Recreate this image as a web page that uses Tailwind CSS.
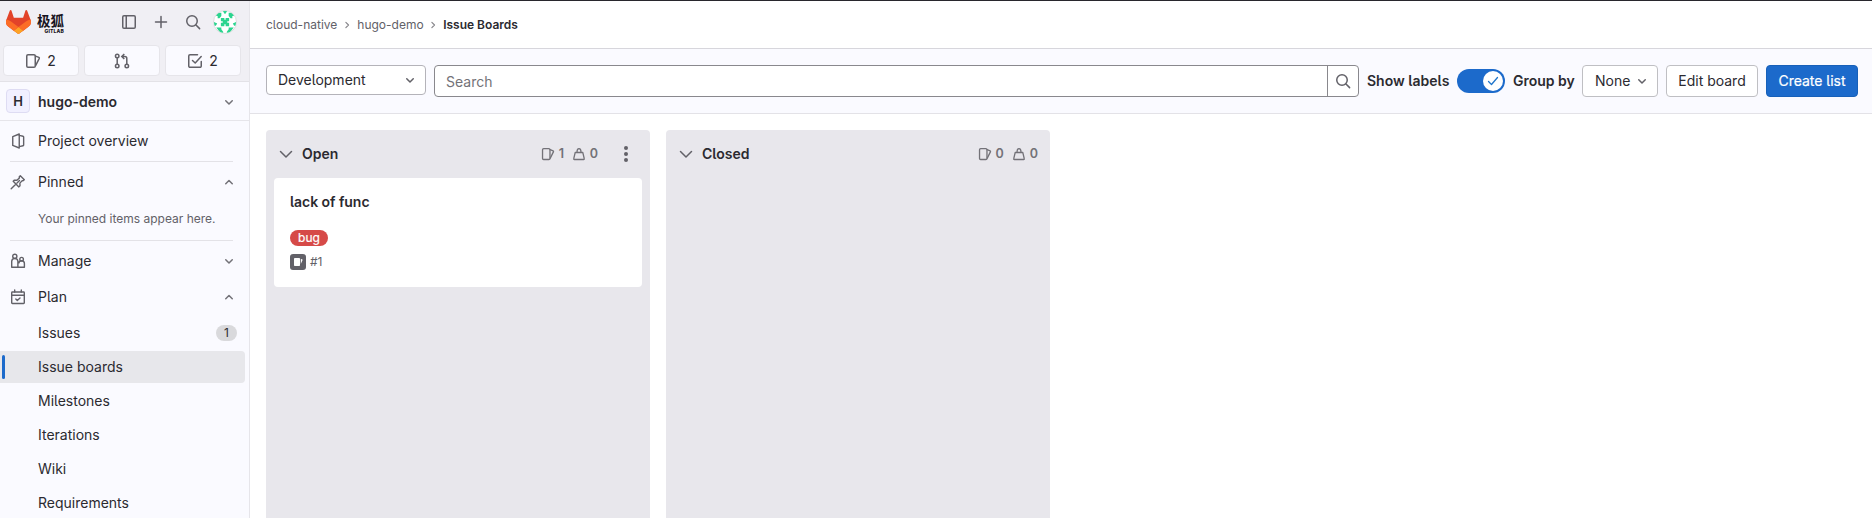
<!DOCTYPE html>
<html lang="en">
<head>
<meta charset="utf-8">
<title>Issue Boards · hugo-demo</title>
<script src="https://cdn.jsdelivr.net/npm/@tailwindcss/browser@4"></script>
</head>
<body class="h-[518px] w-[1872px] overflow-hidden bg-white font-['Inter','Noto_Sans_CJK_SC',sans-serif] text-sm leading-4 text-[#2b2a30] [font-feature-settings:'cv05'_1]">
<svg class="hidden" xmlns="http://www.w3.org/2000/svg">
  <defs>
    <symbol id="down" viewBox="0 0 16 16"><path d="M4.75 6.75 8 10l3.250-3.250" fill="none" stroke="currentColor" stroke-width="1.5" stroke-linecap="round" stroke-linejoin="round"/></symbol>
    <symbol id="up" viewBox="0 0 16 16"><path d="M4.75 9.75 8 6.500l3.250 3.250" fill="none" stroke="currentColor" stroke-width="1.5" stroke-linecap="round" stroke-linejoin="round"/></symbol>
    <symbol id="right" viewBox="0 0 16 16"><path d="M6.500 4.500 10 8l-3.500 3.500" fill="none" stroke="currentColor" stroke-width="1.6" stroke-linecap="round" stroke-linejoin="round"/></symbol>
    <symbol id="lgdown" viewBox="0 0 16 16"><path d="M2.500 5.500 8 11l5.500-5.500" fill="none" stroke="currentColor" stroke-width="1.5" stroke-linecap="round" stroke-linejoin="round"/></symbol>
    <symbol id="search" viewBox="0 0 16 16"><g fill="none" stroke="currentColor" stroke-width="1.5" stroke-linecap="round"><circle cx="7" cy="7" r="5.250"/><path d="m11 11 3.600 3.600"/></g></symbol>
    <symbol id="issues" viewBox="0 0 16 16"><g fill="none" stroke="currentColor" stroke-width="1.5" stroke-linejoin="round" stroke-linecap="round"><rect x="1.750" y="1.750" width="8.500" height="12.500" rx="1.250"/><path d="m10.500 3.100 3.400 1.300a.7.7 0 0 1 .4.900L10.600 12.700"/></g></symbol>
    <symbol id="weight" viewBox="0 0 16 16"><g fill="none" stroke="currentColor" stroke-width="1.5" stroke-linejoin="round"><path d="M3.700 6.250h8.600l1.700 7.100a.7.7 0 0 1-.7.900H2.700a.7.7 0 0 1-.7-.9z"/><path d="M5.700 6c0-2.400.9-4.250 2.300-4.250S10.300 3.600 10.300 6"/></g></symbol>
  </defs>
</svg>
<div class="flex h-full flex-col border-t border-[#28272d]">
<div class="flex min-h-0 flex-1">
  <aside class="w-[250px] shrink-0 border-r border-[#e6e5ea] bg-[#fafaff]">
    <div class="h-[81px] border-b border-[#e3e2e7] bg-[#f0eff4]">
      <div class="flex h-[42px] items-center pl-1.5">
        <svg class="h-6 w-[25px]" viewBox="0 0 25 24"><path fill="#E24329" d="m24.507 9.500-.034-.09L21.082.562a.896.896 0 0 0-1.694.091l-2.290 7.010H7.825L5.535.653a.898.898 0 0 0-1.694-.09L.451 9.411.416 9.500a6.297 6.297 0 0 0 2.090 7.278l.012.01.03.022 5.160 3.867 2.560 1.935 1.554 1.176a1.051 1.051 0 0 0 1.268 0l1.555-1.176 2.560-1.935 5.197-3.890.014-.01A6.297 6.297 0 0 0 24.507 9.500Z"/><path fill="#FC6D26" d="m24.507 9.500-.034-.09a11.440 11.440 0 0 0-4.560 2.051l-7.447 5.632 4.742 3.584 5.197-3.890.014-.01A6.297 6.297 0 0 0 24.507 9.500Z"/><path fill="#FCA326" d="m7.707 20.677 2.560 1.935 1.555 1.176a1.051 1.051 0 0 0 1.268 0l1.555-1.176 2.560-1.935-4.743-3.584-4.755 3.584Z"/><path fill="#FC6D26" d="M5.010 11.461a11.430 11.430 0 0 0-4.560-2.050L.416 9.500a6.297 6.297 0 0 0 2.090 7.278l.012.01.03.022 5.160 3.867 4.745-3.584-7.444-5.632Z"/></svg>
        <div class="ml-[5px] flex w-[28px] flex-col items-end pt-[3px] text-[#171321]">
          <span class="font-['Noto_Sans_CJK_SC',sans-serif] text-[13.500px] leading-[14px] font-bold whitespace-nowrap">极狐</span>
          <span class="mt-[2px] text-[5px] leading-[5px] font-extrabold tracking-[0.15px] whitespace-nowrap">GITLAB</span>
        </div>
        <svg class="ml-[57px] size-4 text-[#626168]" viewBox="0 0 16 16" fill="none" stroke="currentColor" stroke-width="1.5"><rect x="1.750" y="1.750" width="12.500" height="12.500" rx="1.250"/><path d="M5.250 2v12"/></svg>
        <svg class="ml-4 size-4 text-[#626168]" viewBox="0 0 16 16" fill="none" stroke="currentColor" stroke-width="1.500" stroke-linecap="round"><path d="M8 2.500v11M2.500 8h11"/></svg>
        <svg class="ml-4 size-4 text-[#626168]"><use href="#search"/></svg>
        <svg class="ml-3 size-6 rounded-full border border-[#dcdcde] bg-white text-[#2bd48f]" viewBox="0 0 24 24" fill="currentColor">
          <path d="M4 2h4v3.500L6 8H4V5.500H2zM20 2h-4v3.500L18 8h2V5.500h2zM9.500 0h5L12 3.500zM0 12l3.500 1.500L2 16H0zM24 12l-3.500 1.500L22 16h2zM2.500 18H8v2l2 2.500V24H7zM21.500 18H16v2l-2 2.500V24h3z"/>
          <path d="M7.500 7.500h3.800v2h1.400v-2h3.800v3.800h-2v1.400h2v3.800h-3.800v-2h-1.400v2H7.500v-3.800h2v-1.400h-2z"/>
        </svg>
      </div>
      <div class="flex gap-[5px] pt-[2px] pl-[2.500px]">
        <div class="flex h-[31px] w-[76px] items-center justify-center gap-1.5 rounded-[4px] border border-[#e6e5ea] bg-[#fafaff]"><svg class="size-4 text-[#626168]"><use href="#issues"/></svg><span>2</span></div>
        <div class="flex h-[31px] w-[76px] items-center justify-center rounded-[4px] border border-[#e6e5ea] bg-[#fafaff]"><svg class="size-4 text-[#626168]" viewBox="0 0 16 16" fill="none" stroke="currentColor" stroke-width="1.500"><circle cx="3.200" cy="3" r="1.750"/><circle cx="3.200" cy="13" r="1.750"/><circle cx="12.800" cy="13" r="1.750"/><path d="M3.200 4.800v6.400M12.800 11.200V5.500a2 2 0 0 0-2-2H8M10.300 1 7.800 3.500 10.300 6"/></svg></div>
        <div class="flex h-[31px] w-[76px] items-center justify-center gap-1.5 rounded-[4px] border border-[#e6e5ea] bg-[#fafaff]"><svg class="size-4 text-[#626168]" viewBox="0 0 16 16" fill="none" stroke="currentColor" stroke-width="1.500" stroke-linecap="round" stroke-linejoin="round"><path d="M10.500 1.750H3A1.250 1.250 0 0 0 1.750 3v10A1.250 1.250 0 0 0 3 14.250h10A1.250 1.250 0 0 0 14.250 13V8.500M5.500 7.500 8.200 10l6-6.500"/></svg><span>2</span></div>
      </div>
    </div>
    <div class="flex h-[39px] items-center border-b border-[#e6e5ea] pr-3 pl-1.5">
      <span class="flex size-6 items-center justify-center rounded-[4px] border border-[#dedcf3] bg-[#f1f0ff] text-[13px] font-semibold">H</span>
      <span class="ml-2 flex-1 pt-[2px] font-semibold">hugo-demo</span>
      <svg class="mt-[2px] size-4 text-[#737278]"><use href="#down"/></svg>
    </div>
    <div class="flex h-10 items-center pl-2.5">
      <svg class="size-4 text-[#626168]" viewBox="0 0 16 16" fill="none" stroke="currentColor" stroke-width="1.400" stroke-linejoin="round"><path d="M2.750 3.600 9.250 1v14l-6.500-2.600zM9.250 2.400l3.800.8a.7.7 0 0 1 .6.700v8.200a.7.7 0 0 1-.6.7l-3.800.8"/></svg>
      <span class="ml-3">Project overview</span>
    </div>
    <div class="mr-4 ml-2.5 h-px bg-[#e3e2e7]"></div>
    <div class="flex h-10 items-center pr-3">
      <svg class="ml-2.5 size-4 text-[#626168]" viewBox="0 0 16 16" fill="none" stroke="currentColor" stroke-width="1.400" stroke-linejoin="round" stroke-linecap="round"><path d="m10.300 1.700 4 4-1.300 1.100-.8-.2-2.300 2.500.1 2.600-1.100 1.200L3.200 7.200l1.200-1.100 2.500.1 2.500-2.300-.2-.9zM6 10l-4.800 4.800M7 9l2.500-2.500"/></svg>
      <span class="ml-3 flex-1">Pinned</span>
      <svg class="size-4 text-[#737278]"><use href="#up"/></svg>
    </div>
    <div class="flex h-[38px] items-center pb-1 pl-[38px] text-xs text-[#626168]">Your pinned items appear here.</div>
    <div class="mr-4 ml-2.5 h-px bg-[#e3e2e7]"></div>
    <div class="flex h-10 items-center pr-3">
      <svg class="ml-2.5 size-4 text-[#626168]" viewBox="0 0 16 16" fill="none" stroke="currentColor" stroke-width="1.400" stroke-linejoin="round"><circle cx="4.800" cy="3.300" r="2.100"/><path d="M1.700 14.200V8.600a3.100 3.100 0 0 1 6.200 0v5.600zM8 14.200h6.400v-3.700a2.800 2.800 0 0 0-5.600 0"/><circle cx="11.600" cy="6.200" r="1.800"/></svg>
      <span class="ml-3 flex-1">Manage</span>
      <svg class="size-4 text-[#737278]"><use href="#down"/></svg>
    </div>
    <div class="flex h-8 items-center pr-3">
      <svg class="ml-2.5 size-4 text-[#626168]" viewBox="0 0 16 16" fill="none" stroke="currentColor" stroke-width="1.400" stroke-linejoin="round" stroke-linecap="round"><rect x="1.700" y="3" width="12.600" height="11.500" rx=".7"/><path d="M2 6.200h12M4.700.9V3M11.300.9V3M5.800 10l1.500 1.500 2.700-2.500"/></svg>
      <span class="ml-3 flex-1">Plan</span>
      <svg class="size-4 text-[#737278]"><use href="#up"/></svg>
    </div>
    <div class="mt-[3px] mb-px flex h-[34px] items-center pr-3 pl-[38px]"><span class="flex-1">Issues</span><span class="flex h-4 w-[21px] items-center justify-center rounded-full bg-[#d9d9dc] text-xs">1</span></div>
    <div class="mr-1 flex h-8 items-center rounded-r-[4px] bg-[#e7e7eb]"><span class="ml-[2px] h-6 w-[3px] rounded-full bg-[#1c6acb]"></span><span class="ml-[33px]">Issue boards</span></div>
    <div class="pt-px">
      <div class="flex h-[34px] items-center pl-[38px]">Milestones</div>
      <div class="flex h-[34px] items-center pl-[38px]">Iterations</div>
      <div class="flex h-[34px] items-center pl-[38px]">Wiki</div>
      <div class="flex h-[34px] items-center pl-[38px]">Requirements</div>
    </div>
  </aside>
  <main class="flex min-w-0 flex-1 flex-col">
    <nav class="flex h-12 shrink-0 items-center border-b border-[#d7d6dc] pl-4 text-xs text-[#626168]">
      <span>cloud-native</span>
      <svg class="mr-1 ml-1 size-3 text-[#89888d]"><use href="#right"/></svg>
      <span>hugo-demo</span>
      <svg class="mr-1 ml-[3.500px] size-3 text-[#89888d]"><use href="#right"/></svg>
      <span class="font-semibold text-[#2b2a30]">Issue Boards</span>
    </nav>
    <div class="flex h-[65px] shrink-0 items-start gap-2 border-b border-[#e3e2e7] bg-[#fafaff] pt-4 pl-4">
      <div class="flex h-[30px] w-[160px] items-center justify-between rounded-[4px] border border-[#b4b3b9] bg-white pr-[7px] pl-[11px]"><span>Development</span><svg class="size-4 text-[#626168]"><use href="#down"/></svg></div>
      <div class="flex h-8 w-[925px] rounded-[4px] border border-[#89888d] bg-white">
        <div class="flex flex-1 items-center pt-px pl-[11px] text-[#737278]">Search</div>
        <div class="flex w-[31px] items-center justify-center border-l border-[#89888d]"><svg class="size-4 text-[#626168]"><use href="#search"/></svg></div>
      </div>
      <div class="flex h-8 w-[82px] items-center font-semibold whitespace-nowrap">Show labels</div>
      <div class="flex h-8 w-12 items-center"><div class="flex h-6 w-12 items-center justify-end rounded-full bg-[#1c6acb] pr-[2px]"><span class="flex size-5 items-center justify-center rounded-full bg-white"><svg class="size-4" viewBox="0 0 16 16" fill="none" stroke="#1f75cb" stroke-width="1.300" stroke-linecap="round" stroke-linejoin="round"><path d="m3.500 8.500 3 3 6-7"/></svg></span></div></div>
      <div class="flex h-8 w-[61px] items-center font-semibold whitespace-nowrap">Group by</div>
      <div class="flex h-8 w-[76px] items-center justify-between rounded-[4px] border border-[#bfbfc3] bg-white pr-[7px] pl-3"><span>None</span><svg class="size-4 text-[#626168]"><use href="#down"/></svg></div>
      <div class="flex h-8 w-[92px] items-center justify-center rounded-[4px] border border-[#bfbfc3] bg-white whitespace-nowrap">Edit board</div>
      <div class="flex h-8 w-[92px] items-center justify-center rounded-[4px] border border-[#1760b9] bg-[#1c6acb] whitespace-nowrap text-white [-webkit-text-stroke:0.2px]">Create list</div>
    </div>
    <div class="flex flex-1 gap-4 pt-4 pl-4">
      <section class="w-[384px] rounded-t-[4px] bg-[#e8e7ec] px-2">
        <header class="flex h-12 items-center pl-1">
          <svg class="size-4 text-[#626168]"><use href="#lgdown"/></svg>
          <h2 class="ml-2 flex-1 font-semibold">Open</h2>
          <div class="flex items-center text-[12.500px] font-semibold text-[#737278]"><svg class="size-3.5"><use href="#issues"/></svg><span class="ml-1 w-[9px]">1</span><svg class="ml-1 size-3.5"><use href="#weight"/></svg><span class="ml-1">0</span></div>
          <svg class="mr-2 ml-5 size-4 text-[#626168]" viewBox="0 0 16 16" fill="currentColor"><circle cx="8" cy="2" r="2"/><circle cx="8" cy="8" r="2"/><circle cx="8" cy="14" r="2"/></svg>
        </header>
        <article class="h-[109px] rounded-[4px] bg-white pt-4 pl-4">
          <h3 class="font-semibold tracking-[-0.05px]">lack of func</h3>
          <div class="mt-5 flex h-4 w-[38px] items-center justify-center rounded-full bg-[#d64a48] text-xs leading-4 text-white [-webkit-text-stroke:0.2px]">bug</div>
          <div class="mt-2 flex items-center gap-1 text-xs text-[#626168]"><svg class="size-4" viewBox="0 0 16 16"><rect width="16" height="16" rx="3" fill="#626168"/><rect x="4" y="4" width="6" height="8" rx=".7" fill="#fff"/><path d="m10.800 4.700 1.500.7a.5.5 0 0 1 .3.700L10.800 10z" fill="#fff"/></svg><span>#1</span></div>
        </article>
      </section>
      <section class="w-[384px] rounded-t-[4px] bg-[#e8e7ec] px-2">
        <header class="flex h-12 items-center pr-1 pl-1">
          <svg class="size-4 text-[#626168]"><use href="#lgdown"/></svg>
          <h2 class="ml-2 flex-1 font-semibold">Closed</h2>
          <div class="flex items-center text-[12.500px] font-semibold text-[#737278]"><svg class="size-3.5"><use href="#issues"/></svg><span class="ml-1">0</span><svg class="ml-2 size-3.5"><use href="#weight"/></svg><span class="ml-1">0</span></div>
        </header>
      </section>
    </div>
  </main>
</div>
</div>
</body>
</html>
